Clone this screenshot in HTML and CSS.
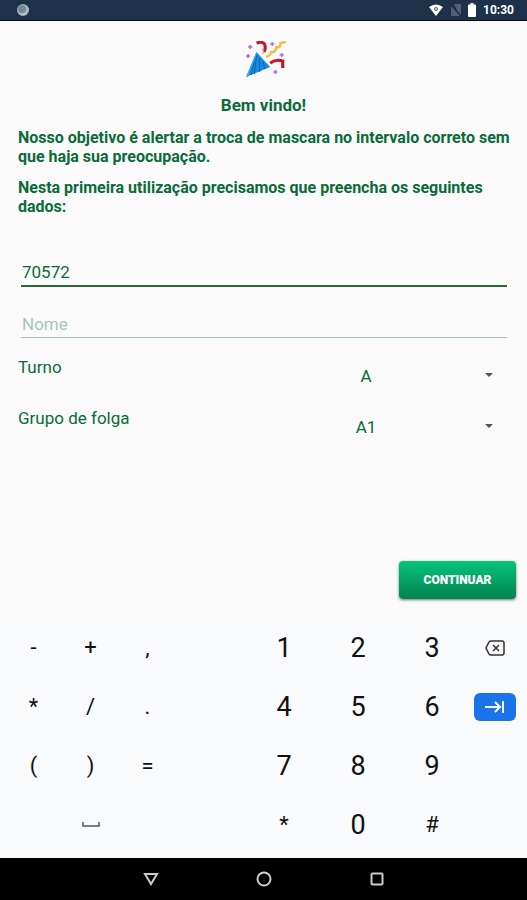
FILE: index.html
```html
<!DOCTYPE html>
<html lang="pt-BR">
<head>
  <meta charset="UTF-8">
  <meta name="viewport" content="width=device-width, initial-scale=1">
  <title>Bem vindo!</title>
  <link rel="stylesheet" href="styles.css">
</head>
<body>
  <header class="status-bar">
    <svg class="status-sync" width="14" height="14" viewBox="0 0 14 14">
      <circle cx="7" cy="7" r="6" fill="#a5b0bb"/>
      <circle cx="6" cy="6" r="4" fill="#788795"/>
      <path d="M4 11a6 6 0 0 0 8-6" fill="none" stroke="#c0c9d0" stroke-width="1"/>
    </svg>
    <div class="status-icons">
      <svg width="16" height="14" viewBox="0 0 16 14">
        <path d="M1 4Q8-1 15 4L8 13Z" fill="#fff"/>
        <path d="M6.500 5Q8 3.500 9.500 5V7Q8 8.500 6.500 7Z" fill="#b5bec6" stroke="#6b7c8c"/>
      </svg>
      <svg width="12" height="14" viewBox="0 0 12 14">
        <path d="M4 1H11V12L1 3V13H10" fill="#51616f"/>
        <path d="M1 2L11 13" stroke="#1d3148" stroke-width="1.500"/>
      </svg>
      <svg width="8" height="14" viewBox="0 0 8 14">
        <path d="M2.500 0H5.500V1.500H7Q8 1.500 8 2.500V13Q8 14 7 14H1Q0 14 0 13V2.500Q0 1.500 1 1.500H2.500Z" fill="#fff"/>
      </svg>
      <span class="clock">10:30</span>
    </div>
  </header>

  <main class="content">
    <svg class="party" width="42" height="38" viewBox="0 0 40 38" preserveAspectRatio="none">
      <path d="M10 11L23 26L0 36Z" fill="#168be0"/>
      <path d="M10 14L8 33M13 17L13 31M16 20L18 28M8 20L5 34" stroke="#0869b8" stroke-width="1"/>
      <path d="M10 12L1 36" stroke="#45adf0" stroke-width="1"/>
      <path d="M10 2Q17 0 18 4Q19 8 17 11" fill="none" stroke="#cc1424" stroke-width="3"/>
      <path d="M15 8Q18 9 16 13" fill="none" stroke="#f08a90" stroke-width="1"/>
      <path d="M23 22Q29 18 35 20L35 27" fill="none" stroke="#cc1424" stroke-width="3"/>
      <path d="M19 16Q23 15 24 11Q28 12 29 6Q33 7 33 2L38 1" fill="none" stroke="#ecc045" stroke-width="2.500"/>
      <path d="M4 4V8M2 6H6M2 13V17M0 15H4M25 1V5M23 3H27M34 12V16M32 14H36M28 29V33M26 31H30" stroke="#b968e8" stroke-width="1.500"/>
    </svg>
    <h1>Bem vindo!</h1>
    <p>Nosso objetivo é alertar a troca de mascara no intervalo correto sem que haja sua preocupação.</p>
    <p>Nesta primeira utilização precisamos que preencha os seguintes dados:</p>

    <form class="form">
      <input class="field field-active" type="text" inputmode="numeric" value="70572" aria-label="Matrícula">
      <input class="field" type="text" placeholder="Nome" aria-label="Nome">

      <div class="select-row">
        <label for="turno">Turno</label>
        <div class="select-box">
          <select id="turno">
            <option>A</option>
            <option>B</option>
            <option>C</option>
          </select>
        </div>
      </div>
      <div class="select-row">
        <label for="grupo">Grupo de folga</label>
        <div class="select-box">
          <select id="grupo">
            <option>A1</option>
            <option>A2</option>
          </select>
        </div>
      </div>

      <button class="btn-continue" type="submit">CONTINUAR</button>
    </form>
  </main>

  <section class="keyboard">
    <button class="key">-</button>
    <button class="key">+</button>
    <button class="key">,</button>
    <button class="key digit first-digit">1</button>
    <button class="key digit">2</button>
    <button class="key digit">3</button>
    <button class="key" aria-label="Apagar">
      <svg width="20" height="16" viewBox="0 0 20 16" fill="none" stroke="#333" stroke-width="1.500">
        <path d="M6 1H17Q19 1 19 3V13Q19 15 17 15H6Q5 15 4 14L1 8L4 2Q5 1 6 1Z"/>
        <path d="M8 5L14 11M14 5L8 11"/>
      </svg>
    </button>

    <button class="key">*</button>
    <button class="key">/</button>
    <button class="key">.</button>
    <button class="key digit first-digit">4</button>
    <button class="key digit">5</button>
    <button class="key digit">6</button>
    <button class="key key-next" aria-label="Avançar">
      <svg width="20" height="12" viewBox="0 0 20 12" fill="none" stroke="#fff" stroke-width="2">
        <path d="M0 6H14M10 1L15 6L10 11M18 0V12"/>
      </svg>
    </button>

    <button class="key">(</button>
    <button class="key">)</button>
    <button class="key">=</button>
    <button class="key digit first-digit">7</button>
    <button class="key digit">8</button>
    <button class="key digit">9</button>

    <button class="key key-space" aria-label="Espaço">
      <svg width="18" height="6" viewBox="0 0 18 6" fill="none" stroke="#555" stroke-width="1.500">
        <path d="M1 0V4H17V0"/>
      </svg>
    </button>
    <button class="key first-digit">*</button>
    <button class="key digit">0</button>
    <button class="key">#</button>
  </section>

  <nav class="nav-bar">
    <button aria-label="Voltar">
      <svg width="16" height="16" viewBox="0 0 16 16"><path d="M2 3H14L8 13Z"/></svg>
    </button>
    <button aria-label="Início">
      <svg width="16" height="16" viewBox="0 0 16 16"><circle cx="8" cy="8" r="6.500"/></svg>
    </button>
    <button aria-label="Recentes">
      <svg width="16" height="16" viewBox="0 0 16 16"><rect x="2.500" y="2.500" width="11" height="11" rx="1"/></svg>
    </button>
  </nav>
</body>
</html>
```

FILE: styles.css
```css
* {
  box-sizing: border-box;
}
body {
  margin: 0;
  min-height: 100vh;
  display: flex;
  flex-direction: column;
  background: #fafafa;
  color: #0b6b38;
  font-family: Roboto, "Liberation Sans", sans-serif;
  font-size: 17px;
}
button {
  padding: 0;
  border: 0;
  background: none;
  font-family: inherit;
}
svg {
  display: block;
}

/* status bar */
.status-bar {
  display: flex;
  justify-content: space-between;
  align-items: center;
  height: 21px;
  padding: 0 13px 0 16px;
  background: #1d3148;
  border-bottom: 1px solid #0a0d12;
}
.status-icons {
  display: flex;
  align-items: center;
  gap: 6px;
}
.clock {
  color: #fff;
  font-size: 12px;
  font-weight: bold;
  margin-left: 1px;
}

/* content */
.content {
  flex: 1;
  display: flex;
  flex-direction: column;
  padding: 20px 11px 13px 18px;
}
.party {
  align-self: center;
}
h1 {
  margin: 16px 7px 13px 0;
  font-size: 17px;
  line-height: 20px;
  text-align: center;
}
p {
  margin: 0 0 12px;
  font-size: 16px;
  font-weight: bold;
  line-height: 19px;
}
.form {
  flex: 1;
  display: flex;
  flex-direction: column;
  padding-top: 20px;
}
.field {
  height: 39px;
  margin: 0 9px 12px 3px;
  padding: 11px 1px 0;
  border: 0;
  border-bottom: 1px solid #a9c0b8;
  border-radius: 0;
  background: none;
  color: inherit;
  font: inherit;
  outline: none;
}
.field::placeholder {
  color: #a3c7b7;
  opacity: 1;
}
.field-active {
  border-bottom: 2px solid #2b6a35;
}
.select-row {
  display: grid;
  grid-template-columns: 210fr 276fr;
  height: 51px;
  padding-right: 12px;
}
.select-row label {
  padding-top: 7px;
}
.select-box {
  position: relative;
}
.select-box select {
  width: 100%;
  height: 51px;
  padding: 0;
  border: 0;
  background: none;
  color: inherit;
  font: inherit;
  text-align: center;
  text-align-last: center;
  appearance: none;
}
.select-box::after {
  content: "";
  position: absolute;
  right: 11px;
  top: 23px;
  border: 4px solid transparent;
  border-top-color: #555;
  border-bottom: 0;
  pointer-events: none;
}
.btn-continue {
  align-self: flex-end;
  width: 117px;
  height: 38px;
  margin-top: auto;
  border-radius: 4px;
  background: linear-gradient(#04c47c, #04834f);
  box-shadow: 0 1px 3px #0008;
  color: #fff;
  font-size: 12px;
  font-weight: 900;
}

/* keyboard */
.keyboard {
  display: grid;
  grid-template-columns: repeat(3, 57fr) 71fr repeat(3, 74fr) 52fr;
  grid-auto-rows: 59px;
  padding: 6px 6px 4px 5px;
  background: #f8fafc;
}
.key {
  display: flex;
  align-items: center;
  justify-content: center;
  color: #111;
  font-size: 22px;
}
.digit {
  font-size: 27px;
}
.first-digit {
  grid-column: 5;
}
.key-space {
  grid-column: 2;
}
.key-next {
  align-self: center;
  height: 28px;
  margin: 0 5px;
  border-radius: 6px;
  background: #1a73e8;
}

/* navigation bar */
.nav-bar {
  display: flex;
  justify-content: center;
  align-items: center;
  gap: 97px;
  height: 42px;
  background: #000;
}
.nav-bar svg {
  fill: none;
  stroke: #ccc;
  stroke-width: 2;
}
```
